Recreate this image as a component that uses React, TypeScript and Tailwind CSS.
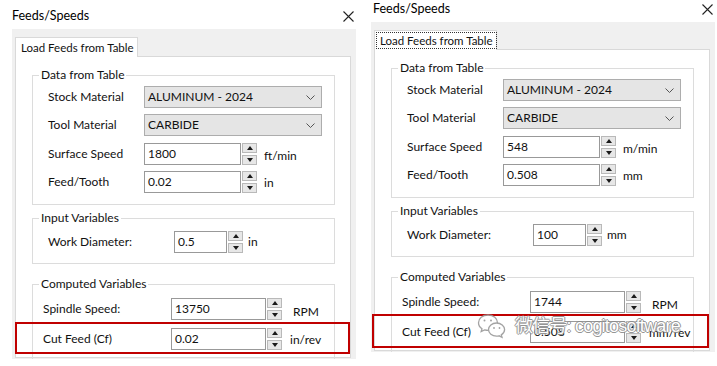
import React from 'react';

type PanelData = {
  surface: string;
  surfaceUnit: string;
  feed: string;
  feedUnit: string;
  diameter: string;
  diameterUnit: string;
  spindle: string;
  cutFeed: string;
  cutFeedUnit: string;
};

function Arrow({ up }: { up?: boolean }) {
  return (
    <svg width="6" height="4" viewBox="0 0 6 4">
      <path d={up ? 'M0 4 L3 0 L6 4 Z' : 'M0 0 L3 4 L6 0 Z'} fill="#1a1a1a" />
    </svg>
  );
}

function Spinner() {
  return (
    <div className="ml-px flex h-[22px] flex-col justify-between">
      <div className="flex h-[10px] w-[15px] items-center justify-center border border-[#b9b9b9] bg-[#e7e7e7]">
        <Arrow up />
      </div>
      <div className="flex h-[10px] w-[15px] items-center justify-center border border-[#b9b9b9] bg-[#e7e7e7]">
        <Arrow />
      </div>
    </div>
  );
}

function NumberBox({ value, width }: { value: string; width: string }) {
  return (
    <div className={`flex h-[22px] items-center border border-[#999] bg-white px-[3px] ${width}`}>{value}</div>
  );
}

function Select({ value }: { value: string }) {
  return (
    <div className="flex h-[22px] w-[178px] items-center justify-between border border-[#adadad] bg-[#e5e5e5] pl-[3px] pr-[6px]">
      <span>{value}</span>
      <svg width="9" height="5" viewBox="0 0 9 5">
        <path d="M0.5 0.5 L4.5 4.5 L8.5 0.5" stroke="#555" strokeWidth="1" fill="none" />
      </svg>
    </div>
  );
}

function Group({
  title,
  children,
  className,
  inner,
}: {
  title: string;
  children: React.ReactNode;
  className: string;
  inner: string;
}) {
  return (
    <fieldset className={`w-[303px] border border-[#dcdcdc] ${className}`}>
      <legend className="ml-[6px] px-[2px] leading-[14px]">{title}</legend>
      <div className={inner}>{children}</div>
    </fieldset>
  );
}

function Panel({
  data,
  titleRow,
  redBox,
  tabFocus,
  children,
}: {
  data: PanelData;
  titleRow: string;
  redBox: string;
  tabFocus?: boolean;
  children?: React.ReactNode;
}) {
  return (
    <div className="relative flex h-[366px] w-[358px] shrink-0 flex-col bg-white text-[12px] text-[#111]">
      <div className={`flex items-center justify-between pr-[4px] ${titleRow}`}>
        <span className="text-[12.5px] text-black">Feeds/Speeds</span>
        <svg width="11" height="11" viewBox="0 0 11 11">
          <path d="M0.5 0.5 L10.5 10.5 M10.5 0.5 L0.5 10.5" stroke="#222" strokeWidth="1.1" />
        </svg>
      </div>
      <div className="ml-[12px] flex h-[330px] w-[344px] flex-col bg-[#f0f0f0] pl-[3px] pr-[5px] pt-[8px]">
        <div className="relative z-10 -mb-px flex h-[20px] w-[123px] items-center whitespace-nowrap border border-b-0 border-[#d9d9d9] bg-white px-[2px]">
          <span
            className={`px-[3px] text-[11.5px] leading-[15px] ${tabFocus ? 'outline outline-1 outline-dotted outline-[#333]' : ''}`}
          >
            Load Feeds from Table
          </span>
        </div>
        <div className="flex h-[302px] flex-col border border-[#d9d9d9] bg-white pl-[16px]">
          <Group title="Data from Table" className="mt-[11px]" inner="flex flex-col gap-[6px] pb-[11px] pl-[15px] pt-[4px]">
            <div className="flex items-center">
              <span className="w-[96px]">Stock Material</span>
              <Select value="ALUMINUM - 2024" />
            </div>
            <div className="flex items-center">
              <span className="w-[96px]">Tool Material</span>
              <Select value="CARBIDE" />
            </div>
            <div className="flex items-center">
              <span className="w-[96px]">Surface Speed</span>
              <NumberBox value={data.surface} width="w-[97px]" />
              <Spinner />
              <span className="ml-[7px] mt-[5px]">{data.surfaceUnit}</span>
            </div>
            <div className="flex items-center">
              <span className="w-[96px]">Feed/Tooth</span>
              <NumberBox value={data.feed} width="w-[97px]" />
              <Spinner />
              <span className="ml-[7px] mt-[2px]">{data.feedUnit}</span>
            </div>
          </Group>
          <Group title="Input Variables" className="mt-[6px]" inner="flex items-center pb-[10px] pl-[15px] pt-[6px]">
            <span className="w-[126px]">Work Diameter:</span>
            <NumberBox value={data.diameter} width="w-[53px]" />
            <Spinner />
            <span className="ml-[5px]">{data.diameterUnit}</span>
          </Group>
          <Group title="Computed Variables" className="mt-[13px]" inner="flex flex-col gap-[7px] pb-[9px] pl-[10px] pt-[6px]">
            <div className="flex items-center">
              <span className="w-[128px]">Spindle Speed:</span>
              <NumberBox value={data.spindle} width="w-[95px]" />
              <Spinner />
              <span className="ml-[11px] mt-[6px]">RPM</span>
            </div>
            <div className="flex items-center">
              <span className="w-[128px]">Cut Feed (Cf)</span>
              <NumberBox value={data.cutFeed} width="w-[95px]" />
              <Spinner />
              <span className="ml-[8px] mt-[2px]">{data.cutFeedUnit}</span>
            </div>
          </Group>
        </div>
      </div>
      <div className="h-[7px] bg-white" />
      <div className={`pointer-events-none absolute border-2 border-[#c00000] ${redBox}`} />
      {children}
    </div>
  );
}

function Watermark() {
  return (
    <div className="pointer-events-none absolute left-[118px] top-[320px] flex items-center gap-[8px] whitespace-nowrap opacity-90">
      <svg width="30" height="26" viewBox="0 0 30 26" fill="white" stroke="#9a9a9a" strokeWidth="1.3">
        <path d="M11 2 C5.5 2 1.5 5.5 1.5 9.8 C1.5 12.3 2.8 14.4 5 15.8 L4.2 18.6 L7.6 16.9 C8.7 17.2 9.8 17.4 11 17.4 C16.5 17.4 20.5 13.9 20.5 9.7 C20.5 5.5 16.5 2 11 2 Z" />
        <path d="M19.5 10 C15 10 11.5 13 11.5 16.6 C11.5 20.2 15 23.2 19.5 23.2 C20.4 23.2 21.3 23.1 22.1 22.8 L25 24.3 L24.3 21.9 C26.4 20.7 27.6 18.8 27.6 16.6 C27.6 13 24 10 19.5 10 Z" />
        <circle cx="7.5" cy="7.5" r="1" fill="#9a9a9a" stroke="none" />
        <circle cx="14" cy="7.5" r="1" fill="#9a9a9a" stroke="none" />
        <circle cx="17" cy="15" r="0.9" fill="#9a9a9a" stroke="none" />
        <circle cx="22.5" cy="15" r="0.9" fill="#9a9a9a" stroke="none" />
      </svg>
      <span className="whitespace-nowrap font-['Liberation_Sans','Noto_Sans_CJK_SC',sans-serif] text-[18px] leading-[24px] tracking-[-0.8px] text-white [text-shadow:1px_0_#8a8a8a,-1px_0_#8a8a8a,0_1px_#8a8a8a,0_-1px_#8a8a8a]">
        微信号: cogitosoftware
      </span>
    </div>
  );
}

export default function App() {
  const imperial: PanelData = {
    surface: '1800',
    surfaceUnit: 'ft/min',
    feed: '0.02',
    feedUnit: 'in',
    diameter: '0.5',
    diameterUnit: 'in',
    spindle: '13750',
    cutFeed: '0.02',
    cutFeedUnit: 'in/rev',
  };
  const metric: PanelData = {
    surface: '548',
    surfaceUnit: 'm/min',
    feed: '0.508',
    feedUnit: 'mm',
    diameter: '100',
    diameterUnit: 'mm',
    spindle: '1744',
    cutFeed: '0.508',
    cutFeedUnit: 'mm/rev',
  };

  return (
    <div className="flex h-[366px] w-[717px] overflow-hidden bg-white font-['Lato','Liberation_Sans',sans-serif]">
      <Panel
        data={imperial}
        titleRow="h-[29px] pl-[12px] pt-[3px]"
        redBox="left-[15px] top-[322px] h-[32px] w-[335px]"
      />
      <div className="-mt-[7px] ml-px">
        <Panel
          data={metric}
          titleRow="h-[29px] pl-[14px] pt-[3px]"
          redBox="left-[13px] top-[321px] h-[34px] w-[337px]"
          tabFocus
        >
          <Watermark />
        </Panel>
      </div>
    </div>
  );
}
